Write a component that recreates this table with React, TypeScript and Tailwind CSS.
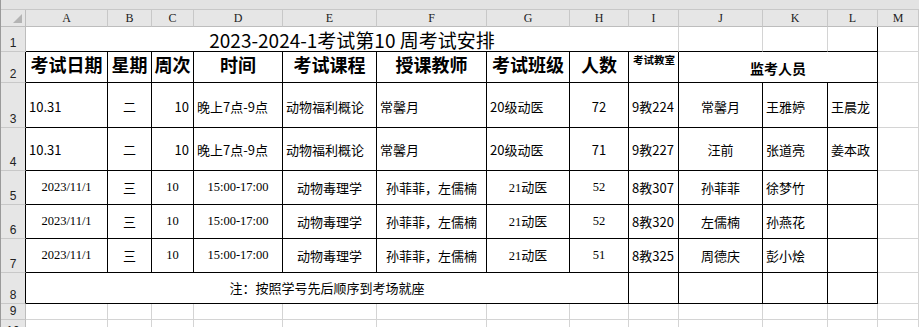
import React from "react";

const cjk = "font-['Noto_Sans_CJK_SC',sans-serif]";
const serif = "font-['Liberation_Serif','Noto_Sans_CJK_SC',serif]";

type Align = "l" | "c" | "r";

const alignCls: Record<Align, string> = {
  l: "justify-start pl-[3px]",
  c: "justify-center",
  r: "justify-end pr-[4px]",
};

const Cell = ({
  children,
  a = "l",
  black = true,
  rightBlack,
  bottomBlack,
  className = "",
}: {
  children?: React.ReactNode;
  a?: Align;
  black?: boolean;
  rightBlack?: boolean;
  bottomBlack?: boolean;
  className?: string;
}) => {
  const r = rightBlack ?? black;
  const b = bottomBlack ?? black;
  return (
    <div
      className={`flex items-center overflow-hidden whitespace-nowrap border-r border-b ${
        r ? "border-r-black" : "border-r-[#d4d4d4]"
      } ${b ? "border-b-black" : "border-b-[#d4d4d4]"} ${alignCls[a]} ${className}`}
    >
      {children}
    </div>
  );
};

const RowHead = ({ n, black }: { n: number; black?: boolean }) => (
  <div
    className={`flex items-end justify-center overflow-hidden bg-[#e6e6e6] border-r border-b border-b-[#c8c8c8] pb-[1px] text-[12px] leading-[14px] text-[#222] font-['Liberation_Sans',sans-serif] ${
      black ? "border-r-black" : "border-r-[#bdbdbd]"
    }`}
  >
    {n}
  </div>
);

const Sp = ({ children }: { children: React.ReactNode }) => (
  <span className={`${serif} text-[12.5px]`}>{children}</span>
);

const cols = ["A", "B", "C", "D", "E", "F", "G", "H", "I", "J", "K", "L", "M"];

type Row = [string, Align][];

const topRows: Row[] = [
  [
    ["10.31", "l"],
    ["二", "c"],
    ["10", "r"],
    ["晚上7点-9点", "l"],
    ["动物福利概论", "l"],
    ["常馨月", "l"],
    ["20级动医", "l"],
    ["72", "c"],
    ["9教224", "l"],
    ["常馨月", "c"],
    ["王雅婷", "l"],
    ["王晨龙", "l"],
  ],
  [
    ["10.31", "l"],
    ["二", "c"],
    ["10", "r"],
    ["晚上7点-9点", "l"],
    ["动物福利概论", "l"],
    ["常馨月", "l"],
    ["20级动医", "l"],
    ["71", "c"],
    ["9教227", "l"],
    ["汪前", "c"],
    ["张道亮", "l"],
    ["姜本政", "l"],
  ],
];

const toxRows = [
  { n: "52", room: "8教307", j: "孙菲菲", k: "徐梦竹" },
  { n: "52", room: "8教320", j: "左儒楠", k: "孙燕花" },
  { n: "51", room: "8教325", j: "周德庆", k: "彭小烩" },
];

const App = () => {
  return (
    <div className={`w-[919px] h-[327px] overflow-hidden bg-white text-black ${cjk} border-l border-l-[#9a9a9a]`}>
      <div className="h-[10px] bg-[#e3e3e3] border-b border-[#c8c8c8]" />
      <div className="grid grid-cols-[25px_82px_44px_42px_89px_94px_110px_83px_59px_50px_84px_65px_50px_1fr] grid-rows-[17px_25px_31px_45px_43px_34px_34px_34px_31px_16px_20px]">
        {/* column headers */}
        <div className="relative bg-[#e6e6e6] border-r border-b border-[#bdbdbd]">
          <svg className="absolute right-[3px] bottom-[3px]" width="9" height="9" viewBox="0 0 9 9">
            <polygon points="9,0 9,9 0,9" fill="#b4b4b4" />
          </svg>
        </div>
        {cols.map((c) => (
          <div
            key={c}
            className={`flex items-center justify-center bg-[#e6e6e6] border-r border-b border-r-[#c8c8c8] border-b-[#bdbdbd] text-[12px] text-[#222] ${serif}`}
          >
            {c}
          </div>
        ))}

        {/* row 1 */}
        <RowHead n={1} />
        <Cell a="c" rightBlack={false} className="col-span-9 text-[19px] leading-none">
          2023-2024-1考试第10 周考试安排
        </Cell>
        <Cell rightBlack={false} />
        <Cell rightBlack={false} />
        <Cell />
        <Cell black={false} />

        {/* row 2 */}
        <RowHead n={2} black />
        {["考试日期", "星期", "周次", "时间", "考试课程", "授课教师", "考试班级", "人数"].map((h) => (
          <Cell key={h} a="c" className="text-[18px] font-bold pb-[6px]">
            {h}
          </Cell>
        ))}
        <Cell className="!items-start text-[10.5px] font-bold pl-[4px]">考试教室</Cell>
        <Cell a="c" className="col-span-3 text-[14px] font-bold pt-[3px]">
          监考人员
        </Cell>
        <Cell black={false} />

        {/* rows 3-4 */}
        {topRows.map((row, i) => (
          <React.Fragment key={i}>
            <RowHead n={3 + i} black />
            {row.map(([t, a], j) => (
              <Cell key={j} a={a} className={`text-[13px] ${i === 0 ? "pt-[4px]" : "pt-[2px]"}`}>
                {t}
              </Cell>
            ))}
            <Cell black={false} />
          </React.Fragment>
        ))}

        {/* rows 5-7 */}
        {toxRows.map((r, i) => (
          <React.Fragment key={i}>
            <RowHead n={5 + i} black />
            <Cell a="c">
              <Sp>2023/11/1</Sp>
            </Cell>
            <Cell a="c" className="text-[13px]">三</Cell>
            <Cell a="c">
              <Sp>10</Sp>
            </Cell>
            <Cell a="c">
              <Sp>15:00-17:00</Sp>
            </Cell>
            <Cell a="c" className="text-[13px]">动物毒理学</Cell>
            <Cell a="c" className="text-[13px]">孙菲菲，左儒楠</Cell>
            <Cell a="c" className="text-[13px]">
              <span>
                <Sp>21</Sp>动医
              </span>
            </Cell>
            <Cell a="c">
              <Sp>{r.n}</Sp>
            </Cell>
            <Cell className="text-[13px]">{r.room}</Cell>
            <Cell a="c" className="text-[13px]">{r.j}</Cell>
            <Cell className="text-[13px]">{r.k}</Cell>
            <Cell />
            <Cell black={false} />
          </React.Fragment>
        ))}

        {/* row 8 */}
        <RowHead n={8} black />
        <Cell a="c" className="col-span-8 text-[13px]">
          注：按照学号先后顺序到考场就座
        </Cell>
        <Cell />
        <Cell />
        <Cell />
        <Cell />
        <Cell black={false} />

        {/* rows 9-10 */}
        {[9, 10].map((n) => (
          <React.Fragment key={n}>
            <RowHead n={n} />
            {cols.map((c) => (
              <Cell key={c} black={false} />
            ))}
          </React.Fragment>
        ))}
      </div>
    </div>
  );
};

export default App;
